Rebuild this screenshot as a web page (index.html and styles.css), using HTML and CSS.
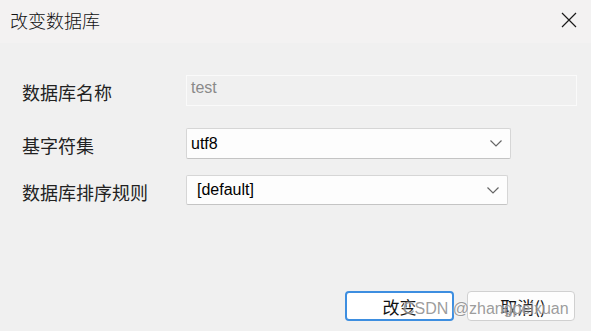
FILE: index.html
```html
<!DOCTYPE html>
<html lang="zh-CN">
<head>
    <meta charset="utf-8"/>
    <title>改变数据库</title>
    <link rel="stylesheet" href="styles.css">
</head>
<body>
<div class="dlg">
    <div class="titlebar">
        <span class="title">改变数据库</span>
        <svg class="close" width="16" height="16" viewBox="0 0 16 16">
            <path d="M1 1L15 15M15 1L1 15" stroke="#1a1a1a" stroke-width="1.2" fill="none"/>
        </svg>
    </div>
    <div class="form">
        <div class="row r1">
            <label class="lbl">数据库名称</label>
            <div class="ipt disabled">test</div>
        </div>
        <div class="row r2">
            <label class="lbl">基字符集</label>
            <div class="sel w1">
                <span>utf8</span>
                <svg width="12" height="7" viewBox="0 0 12 7"><path d="M0.5 0.5L6 6L11.5 0.5" stroke="#666" stroke-width="1.2" fill="none"/></svg>
            </div>
        </div>
        <div class="row r3">
            <label class="lbl">数据库排序规则</label>
            <div class="sel w2">
                <span class="pad">[default]</span>
                <svg width="12" height="7" viewBox="0 0 12 7"><path d="M0.5 0.5L6 6L11.5 0.5" stroke="#666" stroke-width="1.2" fill="none"/></svg>
            </div>
        </div>
    </div>
    <div class="foot">
        <button class="btn ok">改变</button>
        <button class="btn">取消()</button>
        <span class="mark">CSDN @zhangpeixuan</span>
    </div>
</div>
</body>
</html>
```

FILE: styles.css
```css
* {
    padding: 0;
    margin: 0;
    box-sizing: border-box;
}
body {
    background: #f0f0f0;
    font-family: "Liberation Sans", "Noto Sans CJK SC", sans-serif;
    color: #000;
}
.dlg {
    width: 591px;
    height: 331px;
    background: #f0f0f0;
    position: relative;
}
.titlebar {
    height: 43px;
    background: #f3f2f2;
    display: flex;
    align-items: center;
    justify-content: space-between;
    padding: 0 14px 4px 10px;
}
.title {
    font-family: "Noto Sans CJK SC", sans-serif;
    font-size: 18px;
    font-weight: 300;
    color: #111;
}
.form {
    padding: 32px 0 0 22px;
}
.row {
    display: flex;
    align-items: center;
}
.r2 { margin-top: 22px; }
.r3 { margin-top: 16px; }
.lbl {
    width: 164px;
    font-family: "Noto Sans CJK SC", sans-serif;
    font-size: 18px;
    color: #222;
    padding-top: 3px;
}
.ipt {
    width: 391px;
    height: 31px;
    font-size: 16px;
    padding: 3px 0 0 4px;
}
.ipt.disabled {
    background: #f0f0f0;
    border: 1px solid #fafafa;
    color: #8a8a8a;
}
.sel {
    height: 31px;
    background: #fdfdfd;
    border: 1px solid #d6d6d6;
    border-bottom-color: #c4c4c4;
    border-radius: 2px;
    display: flex;
    align-items: center;
    justify-content: space-between;
    padding: 0 8px 0 4px;
    font-size: 16px;
}
.sel.w1 { width: 325px; }
.sel.w2 { width: 322px; height: 30px; }
.sel .pad { padding-left: 6px; }
.foot {
    display: flex;
    justify-content: flex-end;
    gap: 13px;
    padding-right: 16px;
    margin-top: 86px;
}
.btn {
    width: 108px;
    height: 30px;
    background: #fdfdfd;
    border: 1px solid #d0d0d0;
    border-radius: 4px;
    font-family: "Noto Sans CJK SC", sans-serif;
    font-size: 17px;
    color: #111;
    padding-left: 4px;
}
.btn.ok {
    width: 109px;
    border: 2px solid #3d8ee0;
    background: #fff;
    padding-left: 0;
}
.mark {
    position: absolute;
    left: 403px;
    top: 300px;
    font-size: 16px;
    color: rgba(130, 130, 130, 0.8);
    text-shadow: 0 0 2px #fff;
}
```
